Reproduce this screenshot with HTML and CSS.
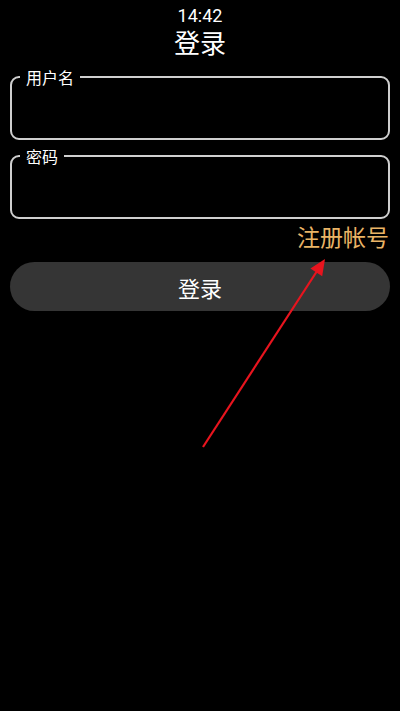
FILE: index.html
```html
<!DOCTYPE html>
<html lang="zh-CN">
<head>
<meta charset="utf-8">
<link rel="stylesheet" href="styles.css">
</head>
<body>
<div class="screen">
  <div class="time">14:42</div>
  <h1 class="title">登录</h1>
  <fieldset class="field">
    <legend class="label">用户名</legend>
    <input class="input" type="text">
  </fieldset>
  <fieldset class="field field-pwd">
    <legend class="label">密码</legend>
    <input class="input" type="password">
  </fieldset>
  <div class="register-row"><span class="register">注册帐号</span></div>
  <button class="login-btn">登录</button>
  <svg class="arrow" width="400" height="711" viewBox="0 0 400 711">
    <line x1="203" y1="447" x2="319" y2="268" stroke="#e8141e" stroke-width="2.2"/>
    <polygon points="325,259 322.2,276.2 310.4,268.6" fill="#e8141e"/>
  </svg>
</div>
</body>
</html>
```
FILE: styles.css
```css
html, body {
  margin: 0;
  padding: 0;
  background: #000;
}
body {
  font-family: Roboto, "Noto Sans CJK SC", sans-serif;
  color: #fff;
}
.screen {
  position: relative;
  width: 400px;
  height: 711px;
  overflow: hidden;
  display: flex;
  flex-direction: column;
}
.time {
  text-align: center;
  font-size: 18px;
  line-height: 20px;
  margin-top: 6px;
}
.title {
  margin: 2px 0 0;
  text-align: center;
  font-family: "Noto Sans CJK SC", sans-serif;
  font-weight: 400;
  font-size: 26px;
  line-height: 28px;
}
.field {
  margin: 12px 10px 0;
  padding: 0;
  border: 2px solid #cfcfcf;
  border-radius: 9px;
  height: 72px;
  box-sizing: border-box;
  min-width: 0;
}
.field-pwd {
  margin-top: 7px;
}
.label {
  margin-left: 8px;
  padding: 0 6px;
  font-family: "Noto Sans CJK SC", sans-serif;
  font-size: 16px;
  line-height: 18px;
  color: #fff;
}
.input {
  display: none;
}
.register-row {
  display: flex;
  justify-content: flex-end;
  padding: 0 11px;
  margin-top: 3px;
}
.register {
  font-family: "Noto Sans CJK SC", sans-serif;
  font-size: 23px;
  line-height: 28px;
  color: #eab466;
}
.login-btn {
  margin: 12px 10px 0;
  height: 49px;
  border: none;
  border-radius: 25px;
  background: #353535;
  color: #fff;
  font-family: "Noto Sans CJK SC", sans-serif;
  font-size: 22px;
  padding: 0;
}
.arrow {
  position: absolute;
  left: 0;
  top: 0;
  pointer-events: none;
}
```
